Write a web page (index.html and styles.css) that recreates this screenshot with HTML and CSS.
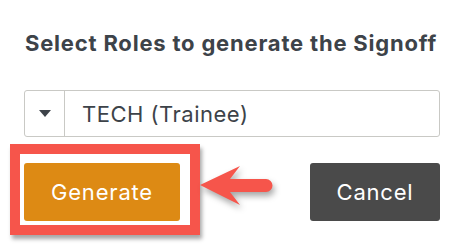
FILE: index.html
```html
<!DOCTYPE html>
<html>
<head lang="en">
    <meta charset="UTF-8">
    <title>Signoff</title>
    <link rel="stylesheet" href="styles.css">
</head>
<body>
<div class="dialog">
    <h3 class="dialog-title">Select Roles to generate the Signoff</h3>
    <div class="role-select">
        <span class="select-caret"><span class="caret"></span></span>
        <span class="select-value">TECH (Trainee)</span>
    </div>
    <div class="dialog-actions">
        <a href="javascript:void(0);" class="btn btn-generate">Generate</a>
        <a href="javascript:void(0);" class="btn btn-cancel">Cancel</a>
    </div>
    <!-- annotation -->
    <div class="mark-box"></div>
    <svg class="mark-arrow" width="80" height="56" viewBox="0 0 80 56">
        <path d="M0 25 L40 6 L30 19 L66 19 A6.5 6.5 0 0 1 66 32 L30 32 L40 45 Z" fill="#f6554b"/>
    </svg>
</div>
</body>
</html>
```

FILE: styles.css
```css
html, body {
    margin: 0;
    padding: 0;
    background: #ffffff;
}
.dialog {
    position: relative;
    width: 416px;
    height: 246px;
    padding: 0 0 0 24px;
    font-family: Inter, "Liberation Sans", sans-serif;
    color: #3d4349;
}
.dialog-title {
    margin: 0;
    padding: 31px 0 0 1px;
    height: 24px;
    line-height: 24px;
    font-size: 22px;
    font-weight: 700;
    letter-spacing: 0.8px;
    white-space: nowrap;
}
.role-select {
    display: flex;
    margin-top: 35px;
    height: 45px;
    border: 1px solid #c9c9c5;
    border-radius: 3px;
}
.select-caret {
    display: flex;
    align-items: center;
    justify-content: center;
    width: 39px;
    border-right: 1px solid #c9c9c5;
}
.caret {
    width: 0;
    height: 0;
    border-left: 6px solid transparent;
    border-right: 6px solid transparent;
    border-top: 7px solid #3d4349;
}
.select-value {
    display: flex;
    align-items: center;
    padding-left: 17px;
    font-size: 22px;
    letter-spacing: 0.5px;
}
.dialog-actions {
    display: flex;
    justify-content: space-between;
    margin-top: 26px;
}
.btn {
    display: flex;
    align-items: center;
    justify-content: center;
    height: 58px;
    border-radius: 3px;
    color: #ffffff;
    font-size: 22px;
    letter-spacing: 0.8px;
    text-decoration: none;
}
.btn-generate {
    width: 156px;
    background: #dd8a14;
}
.btn-cancel {
    width: 130px;
    background: #4a4a4a;
}
.mark-box {
    position: absolute;
    left: 10px;
    top: 144px;
    width: 170px;
    height: 71px;
    border: 10px solid #f6554b;
    box-shadow: 2px 4px 4px rgba(0, 0, 0, 0.35);
}
.mark-arrow {
    position: absolute;
    left: 200px;
    top: 160px;
    filter: drop-shadow(2px 4px 3px rgba(0, 0, 0, 0.35));
}
```
